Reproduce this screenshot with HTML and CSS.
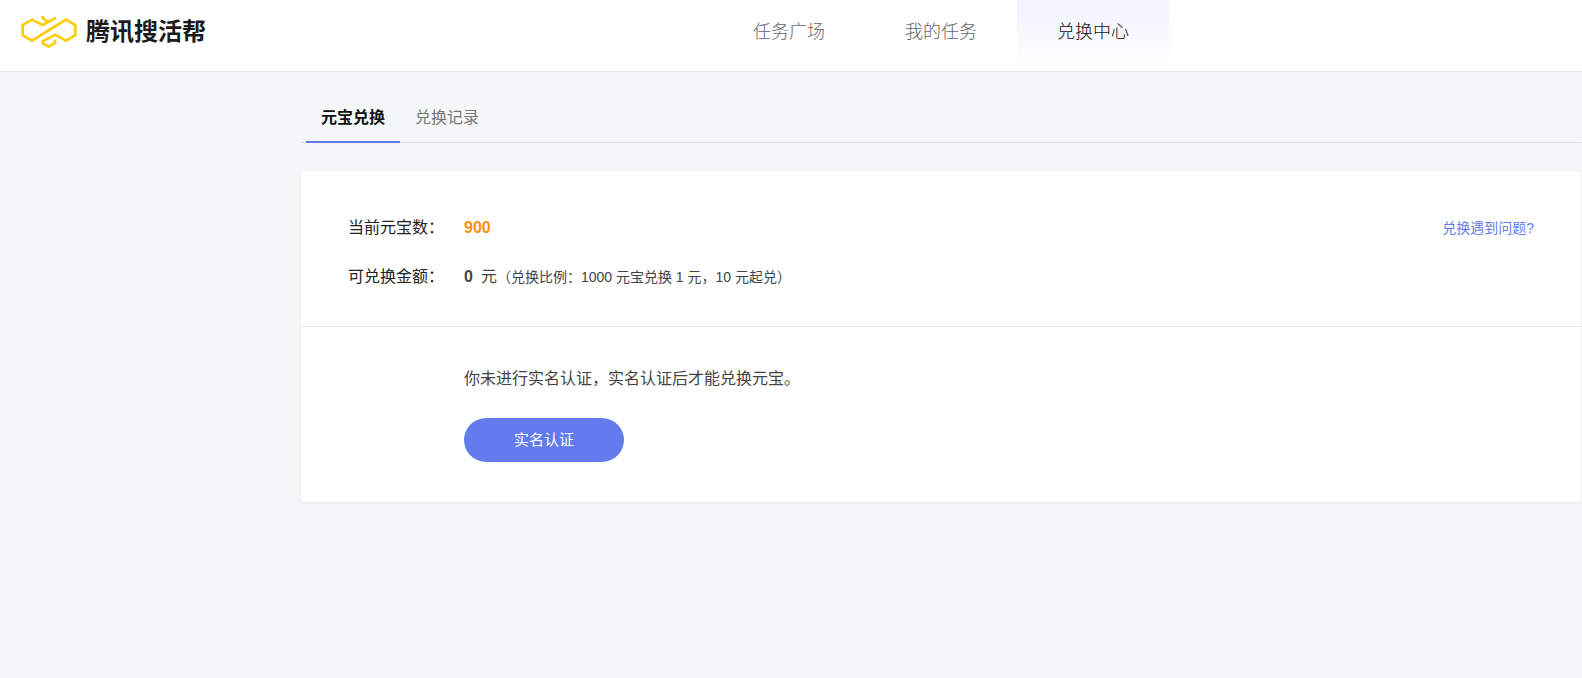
FILE: index.html
```html
<!DOCTYPE html>
<html lang="zh-CN">
<head>
<meta charset="utf-8">
<title>腾讯搜活帮 - 兑换中心</title>
<link rel="stylesheet" href="styles.css">
</head>
<body>
<header class="header">
  <a class="brand" href="#">
    <svg class="brand-mark" viewBox="63 47 168 96" aria-hidden="true">
      <g fill="none" stroke="#ffcc08" stroke-width="8">
        <path d="M168 52 L128 74 L96 58 L68 74 V105 L96 121 L198 58 L226 74 V105 L198 121 L166 103 L128 123 V129 L146 139 L165 128 V118"/>
        <path d="M128 47 V54 L142 63"/>
      </g>
    </svg>
    <span class="brand-name">腾讯搜活帮</span>
  </a>
  <nav class="nav">
    <a class="nav-item" href="#">任务广场</a>
    <a class="nav-item" href="#">我的任务</a>
    <a class="nav-item nav-item-active" href="#">兑换中心</a>
  </nav>
</header>
<main class="main">
  <nav class="tabs">
    <a class="tab tab-active" href="#">元宝兑换</a>
    <a class="tab" href="#">兑换记录</a>
  </nav>
  <section class="card">
    <div class="summary">
      <dl class="facts">
        <dt class="label">当前元宝数：</dt>
        <dd class="value"><strong class="coins">900</strong></dd>
        <dt class="label">可兑换金额：</dt>
        <dd class="value"><strong class="amount">0</strong>元<span class="note">（兑换比例：1000 元宝兑换 1 元，10 元起兑）</span></dd>
      </dl>
      <a class="help" href="#">兑换遇到问题?</a>
    </div>
    <div class="verify">
      <p class="verify-text">你未进行实名认证，实名认证后才能兑换元宝。</p>
      <button class="verify-button" type="button">实名认证</button>
    </div>
  </section>
</main>
</body>
</html>
```
FILE: styles.css
```css
* { box-sizing: border-box; }
body {
  margin: 0;
  min-height: 100vh;
  background: #f4f6f8;
  color: #444;
  font: 16px/24px "Liberation Sans", "Noto Sans CJK SC", sans-serif;
}
a { color: inherit; text-decoration: none; }
.header {
  display: flex;
  justify-content: space-between;
  background: #fff;
  border-bottom: 1px solid #e7e8ea;
}
.brand { display: flex; align-items: center; gap: 9px; padding: 0 0 7px 21px; color: #1c1c1c; }
.brand-mark { width: 56px; height: 32px; }
.brand-name { font-size: 24px; font-weight: 700; line-height: 32px; }
.nav { display: flex; margin-right: 413px; }
.nav-item { padding: 16px 40px 23px; color: #666; font-size: 18px; line-height: 32px; font-weight: 300; }
.nav-item-active { background: linear-gradient(#f1f3ff, #fff); color: #111; }
.main { padding: 22px 1px 0 301px; }
.tabs { display: flex; padding-left: 5px; border-bottom: 1px solid #dcdfe3; }
.tab {
  margin-bottom: -1px;
  padding: 12px 15px 11px;
  border-bottom: 2px solid transparent;
  color: #777;
}
.tab-active { border-color: #637bec; color: #111; font-weight: 700; }
.card {
  margin-top: 28px;
  background: #fff;
  border-radius: 4px;
  box-shadow: 0 1px 4px rgba(0, 0, 0, 0.06);
}
.summary {
  display: flex;
  justify-content: space-between;
  align-items: flex-start;
  padding: 45px 47px 37px;
  border-bottom: 1px solid #e8e8ea;
}
.facts { display: grid; grid-template-columns: 116px auto; row-gap: 25px; margin: 0; }
.label { color: #222; }
.value { margin: 0; }
.coins { color: #f98e10; }
.amount { margin-right: 8px; }
.note { font-size: 14px; }
.help { color: #637bec; font-size: 14px; }
.verify { padding: 40px 47px 40px 163px; }
.verify-text { margin: 0 0 27px; }
.verify-button {
  display: block;
  width: 160px;
  height: 44px;
  border: 0;
  border-radius: 22px;
  background: #637bec;
  color: #fff;
  font: inherit;
  font-size: 15px;
}
```
